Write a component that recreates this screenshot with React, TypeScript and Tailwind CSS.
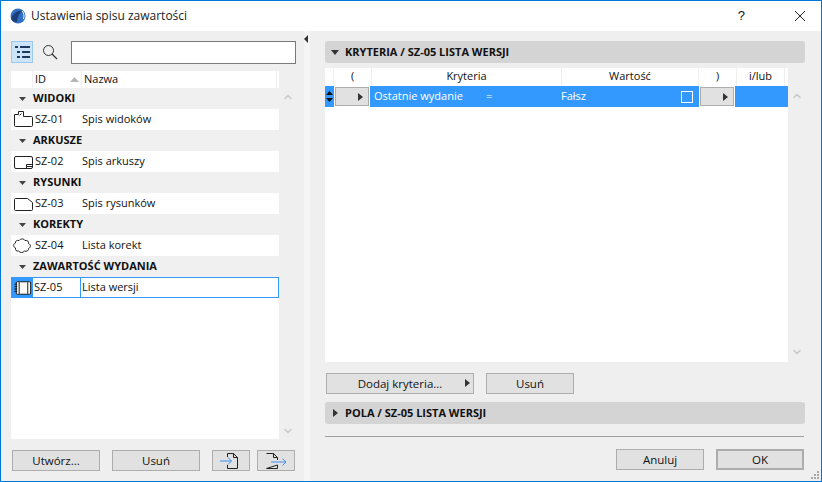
import { ChevronDown, ChevronUp } from "lucide-react";

const font = "font-['Open_Sans','Noto_Sans',sans-serif]";

type Row = { group: string; id: string; name: string; icon: React.ReactNode; selected?: boolean };

const IconView = (
  <svg width="22" height="18" viewBox="0 0 22 18" fill="none" stroke="#222" strokeWidth="1">
    <path d="M2.5 3.5h4v-3h5v5h8a1 1 0 0 1 1 1v8a1 1 0 0 1-1 1h-16a1 1 0 0 1-1-1z" />
    <path d="M7.5 4.5l2-2" />
  </svg>
);
const IconSheet = (
  <svg width="22" height="18" viewBox="0 0 22 18" fill="none" stroke="#222" strokeWidth="1">
    <rect x="2.5" y="3.5" width="18" height="12" rx="1.5" />
    <path d="M14.5 15v-3.5h6M15 13.5h5" />
  </svg>
);
const IconDrawing = (
  <svg width="22" height="18" viewBox="0 0 22 18" fill="none" stroke="#222" strokeWidth="1">
    <path d="M3.5 3.5h12l5 4v7a1 1 0 0 1-1 1h-16a1 1 0 0 1-1-1v-10a1 1 0 0 1 1-1z" />
  </svg>
);
const IconCloud = (
  <svg width="22" height="18" viewBox="0 0 22 18" fill="none" stroke="#222" strokeWidth="1">
    <path d="M7 3.5c1.5-2 5-2 6 0 2.500-.5 4 1 3.500 3 2.500 1 2.500 4 0 5 .5 2-2 3.500-4 2.500-1.500 2-4.500 2-6 0-2 .5-3.500-1-3-3-2.500-1-2.500-4 0-5-.5-2 1.500-3 3.500-2.500z" />
  </svg>
);
const IconBook = (
  <svg width="22" height="18" viewBox="0 0 22 18" fill="none" stroke="#111" strokeWidth="1">
    <rect x="4.500" y="2.500" width="15" height="13" rx="1" fill="#fff" />
    <path d="M7.500 3v12M2.500 5h3M2.500 7.500h3M2.500 10h3M2.500 12.500h3M16.500 3v12" />
  </svg>
);

const rows: Row[] = [
  { group: "WIDOKI", id: "SZ-01", name: "Spis widoków", icon: IconView },
  { group: "ARKUSZE", id: "SZ-02", name: "Spis arkuszy", icon: IconSheet },
  { group: "RYSUNKI", id: "SZ-03", name: "Spis rysunków", icon: IconDrawing },
  { group: "KOREKTY", id: "SZ-04", name: "Lista korekt", icon: IconCloud },
  { group: "ZAWARTOŚĆ WYDANIA", id: "SZ-05", name: "Lista wersji", icon: IconBook, selected: true },
];

function Btn({ className, children }: { className: string; children: React.ReactNode }) {
  return (
    <div className={`h-[21px] flex items-center justify-center bg-[#e1e1e1] border border-[#adadad] text-[11.500px] text-[#111] ${className}`}>
      {children}
    </div>
  );
}

function Arrow({ className }: { className?: string }) {
  return (
    <svg width="5" height="8" viewBox="0 0 5 8" className={className}>
      <path d="M0 0l5 4-5 4z" fill="#333" />
    </svg>
  );
}

function DropBtn({ className }: { className: string }) {
  return (
    <div className={`h-[19px] flex items-center justify-end pr-[5px] bg-[#e1e1e1] border border-[#adadad] outline outline-1 outline-white ${className}`}>
      <Arrow />
    </div>
  );
}

function Section({ title, open }: { title: string; open?: boolean }) {
  return (
    <div className="h-[22px] w-[480px] rounded-[3px] bg-[#d4d4d4] flex items-center text-[11px] font-bold text-[#111]">
      {open ? (
        <svg width="8" height="5" viewBox="0 0 8 5" className="ml-[6px] mr-[6px]">
          <path d="M0 0h8l-4 5z" fill="#333" />
        </svg>
      ) : (
        <Arrow className="ml-[8px] mr-[7px]" />
      )}
      {title}
    </div>
  );
}

export default function App() {
  return (
    <div className={`w-[822px] h-[482px] flex flex-col border border-[#0078d7] bg-[#efefef] text-[#111] overflow-hidden ${font}`}>
      {/* Title bar */}
      <div className="h-[30px] shrink-0 bg-white flex items-center pl-[9px]">
        <svg width="16" height="16" viewBox="0 0 16 16">
          <circle cx="8" cy="8" r="7.500" fill="#2f6fc4" />
          <path d="M1 11C3 5 8 2 13 3c-3 1-5 4-6 11-3 0-5-1-6-3z" fill="#1d3f78" />
          <path d="M12 3c2 2 2.500 5 1.500 8" stroke="#fff" strokeWidth="1" fill="none" />
        </svg>
        <span className="ml-[5px] text-[12px] text-[#222]">Ustawienia spisu zawartości</span>
        <span className="ml-auto mr-[49px] text-[13px] font-['Liberation_Sans',sans-serif]">?</span>
        <svg width="12" height="12" viewBox="0 0 12 12" className="mr-[15px]" stroke="#222" strokeWidth="1">
          <path d="M1 1l10 10M11 1L1 11" />
        </svg>
      </div>

      <div className="flex-1 flex min-h-0">
        {/* Left pane */}
        <div className="w-[303px] shrink-0 pl-[10px] pt-[10px] pb-[10px] flex flex-col">
          <div className="h-[23px] flex items-start">
            <div className="w-[22px] h-[22px] bg-[#cce4f7] border border-[#99c9ef] flex items-center justify-center">
              <svg width="16" height="14" viewBox="0 0 16 14" fill="#1f3a5f">
                <rect x="1" y="1" width="3" height="2" />
                <rect x="6" y="1" width="10" height="2" />
                <rect x="3" y="6" width="3" height="2" />
                <rect x="8" y="6" width="8" height="2" />
                <rect x="3" y="11" width="3" height="2" />
                <rect x="8" y="11" width="8" height="2" />
              </svg>
            </div>
            <svg width="16" height="16" viewBox="0 0 16 16" fill="none" stroke="#333" className="ml-[9px] mt-[3px]">
              <circle cx="6.500" cy="6.500" r="5" />
              <path d="M10 10l5 5" strokeWidth="1.300" />
            </svg>
            <div className="ml-[13px] w-[225px] h-[23px] bg-white border border-[#7a7a7a]" />
          </div>

          <div className="flex mt-[7px] flex-1 min-h-0">
            <div className="w-[268px] flex flex-col bg-white">
              <div className="h-[17px] shrink-0 flex text-[11px] bg-white items-center">
                <div className="w-[22px] h-full border-r border-[#efefef]" />
                <div className="w-[49px] h-full border-r border-[#efefef] flex items-center pl-[2px]">
                  ID
                  <svg width="9" height="5" viewBox="0 0 9 5" className="ml-auto mr-[2px]">
                    <path d="M0 5l4.500-5 4.500 5z" fill="#b5b5b5" />
                  </svg>
                </div>
                <div className="w-[195px] h-full border-r border-[#efefef] pl-[2px] flex items-center">Nazwa</div>
              </div>
              {rows.map((r) => (
                <div key={r.id}>
                  <div className="h-[21px] bg-[#f0f0f0] flex items-center text-[11px] font-bold">
                    <svg width="7" height="4" viewBox="0 0 7 4" className="ml-[8px] mr-[7px]">
                      <path d="M0 0h7l-3.500 4z" fill="#444" />
                    </svg>
                    {r.group}
                  </div>
                  {r.selected ? (
                    <div className="h-[21px] flex items-stretch bg-[#3399ff] p-[1px] text-[11px]">
                      <div className="w-[21px] flex items-center justify-center">{r.icon}</div>
                      <div className="w-[47px] bg-white flex items-center pl-[1px]">{r.id}</div>
                      <div className="ml-[1px] flex-1 bg-white flex items-center pl-[1px]">{r.name}</div>
                    </div>
                  ) : (
                    <div className="h-[21px] flex items-center text-[11px] bg-white">
                      <div className="w-[24px] flex justify-center">{r.icon}</div>
                      <div className="w-[47px]">{r.id}</div>
                      <div>{r.name}</div>
                    </div>
                  )}
                </div>
              ))}
            </div>
            <div className="w-[17px] flex flex-col items-center justify-between pt-[20px] pb-[2px] text-[#c8c8c8]">
              <ChevronUp size={12} strokeWidth={3} />
              <ChevronDown size={12} strokeWidth={3} />
            </div>
          </div>

          <div className="flex mt-[11px] pl-[1px]">
            <Btn className="w-[88px]">Utwórz...</Btn>
            <Btn className="w-[88px] ml-[12px]">Usuń</Btn>
            <Btn className="w-[38px] ml-[12px]">
              <svg width="24" height="18" viewBox="0 0 24 18" fill="none">
                <path d="M8.500 5V1.500h6l4 4v11h-10V13" stroke="#222" />
                <path d="M14.500 1.500v4h4" stroke="#222" />
                <path d="M1 9h11M9 5.500L12.500 9 9 12.500" stroke="#3f8ef0" />
              </svg>
            </Btn>
            <Btn className="w-[38px] ml-[7px]">
              <svg width="26" height="18" viewBox="0 0 26 18" fill="none">
                <path d="M3.500 1.500h7l4 4V8M14.500 13v3.500h-11z" stroke="#222" />
                <path d="M10.500 1.500v4h4" stroke="#222" />
                <path d="M8 10h15M19.500 6.500L23 10l-3.500 3.500" stroke="#3f8ef0" />
              </svg>
            </Btn>
          </div>
        </div>

        {/* Splitter */}
        <div className="w-[6px] shrink-0 bg-[#f5f5f5] relative">
          <svg width="4" height="8" viewBox="0 0 4 8" className="absolute left-[0px] top-[4px]">
            <path d="M4 0L0 4l4 4z" fill="#333" />
          </svg>
        </div>

        {/* Right pane */}
        <div className="flex-1 min-w-0 pl-[15px] pt-[10px] flex flex-col relative">
          <Section title="KRYTERIA / SZ-05 LISTA WERSJI" open />
          <div className="flex mt-[5px]">
            <div className="w-[463px] h-[294px] bg-white flex flex-col">
              <div className="h-[18px] shrink-0 flex text-[11px] text-center">
                <div className="w-[9px] border-r border-[#efefef]" />
                <div className="w-[38px] border-r border-[#efefef]">(</div>
                <div className="w-[190px] border-r border-[#efefef]">Kryteria</div>
                <div className="w-[137px] border-r border-[#efefef]">Wartość</div>
                <div className="w-[38px] border-r border-[#efefef]">)</div>
                <div className="w-[48px] border-r border-[#efefef]">i/lub</div>
              </div>
              <div className="h-[21px] shrink-0 bg-[#3399ff] flex items-center text-[11px] text-white">
                <svg width="7" height="11" viewBox="0 0 7 11" className="ml-[1px] mr-[2px]">
                  <path d="M3.500 0L7 4H0zM3.500 11L0 7h7z" fill="#111" />
                </svg>
                <DropBtn className="w-[34px]" />
                <span className="ml-[5px] w-[112px]">Ostatnie wydanie</span>
                <span className="w-[75px]">=</span>
                <span className="w-[120px]">Fałsz</span>
                <div className="w-[12px] h-[12px] border border-white" />
                <DropBtn className="w-[34px] ml-[7px]" />
              </div>
            </div>
            <div className="w-[17px] flex flex-col items-center justify-between pt-[22px] pb-[4px] text-[#c8c8c8]">
              <ChevronUp size={12} strokeWidth={3} />
              <ChevronDown size={12} strokeWidth={3} />
            </div>
          </div>
          <div className="flex mt-[11px] ml-[1px]">
            <Btn className="w-[148px] relative">
              Dodaj kryteria...
              <Arrow className="absolute right-[3px] top-[5px]" />
            </Btn>
            <Btn className="w-[88px] ml-[12px]">Usuń</Btn>
          </div>
          <div className="mt-[8px]">
            <Section title="POLA / SZ-05 LISTA WERSJI" />
          </div>
          <div className="mt-[12px] h-[1px] w-[479px] bg-[#a0a0a0]" />
          <div className="flex mt-[12px] w-[479px] justify-end">
            <Btn className="w-[88px]">Anuluj</Btn>
            <Btn className="w-[88px] ml-[12px] border-2 border-[#0078d7]">OK</Btn>
          </div>
          <svg width="10" height="10" viewBox="0 0 10 10" fill="#a8a8a8" className="absolute right-[1px] bottom-[1px]">
            <rect x="7" y="1" width="2" height="2" />
            <rect x="4" y="4" width="2" height="2" />
            <rect x="7" y="4" width="2" height="2" />
            <rect x="1" y="7" width="2" height="2" />
            <rect x="4" y="7" width="2" height="2" />
            <rect x="7" y="7" width="2" height="2" />
          </svg>
        </div>
      </div>
    </div>
  );
}
